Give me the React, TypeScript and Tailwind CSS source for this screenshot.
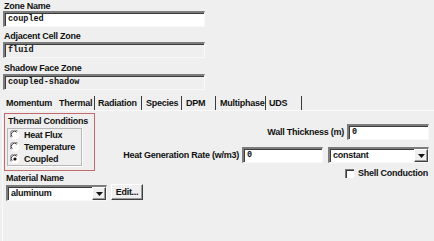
import React from "react";

const sans = { fontFamily: '"Liberation Sans", Arial, sans-serif' };

function Sunken({
  w,
  h = 16,
  bg = "bg-white",
  children,
}: {
  w?: string;
  h?: number;
  bg?: string;
  children?: React.ReactNode;
}) {
  return (
    <div
      className={`${w ?? "w-full"} ${bg} flex items-center border-t-2 border-l-2 border-t-[#7c7c7c] border-l-[#7c7c7c] border-b border-r border-b-[#f8f8f8] border-r-[#f8f8f8] shadow-[inset_1px_1px_0_#3c3c3c] pl-[3px] overflow-hidden`}
      style={{ height: h }}
    >
      <span className="font-['Liberation_Mono',monospace] font-bold text-[8.5px] text-[#111] whitespace-nowrap">
        {children}
      </span>
    </div>
  );
}

function Arrow() {
  return (
    <div className="w-[14px] h-full bg-[#efefef] flex items-center justify-center border-l border-t border-l-white border-t-white border-r border-b border-r-[#404040] border-b-[#404040] shadow-[inset_-1px_-1px_0_#9a9a9a]">
      <svg width="7" height="4" viewBox="0 0 7 4">
        <path d="M0 0h7L3.5 4z" fill="#111" />
      </svg>
    </div>
  );
}

function Combo({ w, text }: { w: string; text: string }) {
  return (
    <div
      className={`${w} h-[16px] bg-white flex items-stretch border-t-2 border-l-2 border-t-[#7c7c7c] border-l-[#7c7c7c] border-b border-r border-b-[#f8f8f8] border-r-[#f8f8f8] shadow-[inset_1px_1px_0_#3c3c3c]`}
    >
      <div className="flex-1 flex items-center pl-[3px] font-bold text-[9px] tracking-[-0.25px] whitespace-nowrap text-[#111]">
        {text}
      </div>
      <Arrow />
    </div>
  );
}

function Radio({ on }: { on?: boolean }) {
  return (
    <svg width="10" height="10" viewBox="0 0 10 10" className="shrink-0">
      <circle cx="5" cy="5" r="4.5" fill="#fff" />
      <path d="M1.2 7.5A4.3 4.3 0 0 1 7.5 1.2" stroke="#7a7a7a" strokeWidth="1" fill="none" />
      <path d="M2.2 6.8A3.2 3.2 0 0 1 6.8 2.2" stroke="#3a3a3a" strokeWidth="1" fill="none" />
      {on && <circle cx="5" cy="5" r="1.6" fill="#111" />}
    </svg>
  );
}

const tabs: { t: string; w: string; pl: string; sep: boolean }[] = [
  { t: "Momentum", w: "w-[56px]", pl: "pl-[6px]", sep: false },
  { t: "Thermal", w: "w-[39px]", pl: "pl-[3px]", sep: true },
  { t: "Radiation", w: "w-[47px]", pl: "pl-[3px]", sep: true },
  { t: "Species", w: "w-[40px]", pl: "pl-[4px]", sep: true },
  { t: "DPM", w: "w-[34px]", pl: "pl-[4px]", sep: true },
  { t: "Multiphase", w: "w-[50px]", pl: "pl-[4px]", sep: true },
  { t: "UDS", w: "w-[36px]", pl: "pl-[3px]", sep: true },
];

const lbl = "text-[9px] font-bold leading-none tracking-[-0.25px] whitespace-nowrap";

export default function App() {
  return (
    <div
      className="w-[434px] h-[241px] bg-[#efefef] text-[#111] overflow-hidden flex flex-col"
      style={sans}
    >
      {/* zone fields */}
      <div className="flex flex-col px-[3px] w-[208px]">
        <div className={`h-[11px] flex items-end pl-px ${lbl}`}>Zone Name</div>
        <Sunken>coupled</Sunken>
        <div className={`h-[15px] flex items-end pl-px pb-[1px] ${lbl}`}>Adjacent Cell Zone</div>
        <Sunken bg="bg-[#efefef]">fluid</Sunken>
        <div className={`h-[16px] flex items-end pl-px pb-[1px] ${lbl}`}>Shadow Face Zone</div>
        <Sunken bg="bg-[#efefef]">coupled-shadow</Sunken>
      </div>

      {/* tabs */}
      <div className="flex h-[16px] mt-[4px] items-end">
        {tabs.map((tab) => (
          <div
            key={tab.t}
            className={`${tab.w} ${tab.pl} h-[14px] flex items-center ${lbl} ${
              tab.sep ? "border-r border-r-[#3a3a3a]" : ""
            }`}
          >
            {tab.t}
          </div>
        ))}
      </div>

      {/* panel */}
      <div className="flex-1 flex flex-col border-t border-t-[#fafafa] border-l border-l-[#fafafa] ml-[2px]">
        <div className="flex">
          <div className="pl-px pt-[2px]">
            <div className="w-[91px] h-[58px] border border-[#c46a6c] flex flex-col px-[2px]">
              <div className={`h-[14px] flex items-center pl-px ${lbl}`}>Thermal Conditions</div>
              <div className="w-[75px] h-[38px] border border-[#b8b8b8] shadow-[1px_1px_0_#fff] flex flex-col justify-center gap-[1px] pl-[2px]">
                {[
                  ["Heat Flux", false],
                  ["Temperature", false],
                  ["Coupled", true],
                ].map(([l, on]) => (
                  <div key={l as string} className="flex items-center gap-[4px] h-[11px]">
                    <Radio on={on as boolean} />
                    <span className={lbl}>{l}</span>
                  </div>
                ))}
              </div>
            </div>
          </div>

          <div className="flex-1 flex flex-col items-end pr-[5px] pt-[13px]">
            <div className="flex items-center gap-[3px]">
              <span className={lbl}>Wall Thickness (m)</span>
              <Sunken w="w-[82px]">0</Sunken>
            </div>
            <div className="flex items-center mt-[7px]">
              <span className={`${lbl} mr-[3px]`}>Heat Generation Rate (w/m3)</span>
              <Sunken w="w-[81px]">0</Sunken>
              <div className="ml-[5px]">
                <Combo w="w-[101px]" text="constant" />
              </div>
            </div>
          </div>
        </div>

        <div className="flex justify-between">
          <div className="flex flex-col pl-px">
            <div className={`h-[12px] flex items-end pl-[2px] ${lbl}`}>Material Name</div>
            <div className="flex items-start gap-[4px] pl-[2px] mt-[2px]">
              <Combo w="w-[101px]" text="aluminum" />
              <div
                className={`w-[32px] h-[16px] -mt-px flex items-center justify-center ${lbl} border-l border-t border-l-white border-t-white border-r border-b border-r-[#404040] border-b-[#404040] shadow-[inset_-1px_-1px_0_#9a9a9a]`}
              >
                Edit...
              </div>
            </div>
          </div>
          <div className="flex items-center gap-[4px] self-start -mt-[2px] pr-[6px]">
            <div className="w-[9px] h-[9px] bg-white border-t border-l border-t-[#7a7a7a] border-l-[#7a7a7a] shadow-[inset_1px_1px_0_#3a3a3a]" />
            <span className={lbl}>Shell Conduction</span>
          </div>
        </div>
      </div>
    </div>
  );
}
